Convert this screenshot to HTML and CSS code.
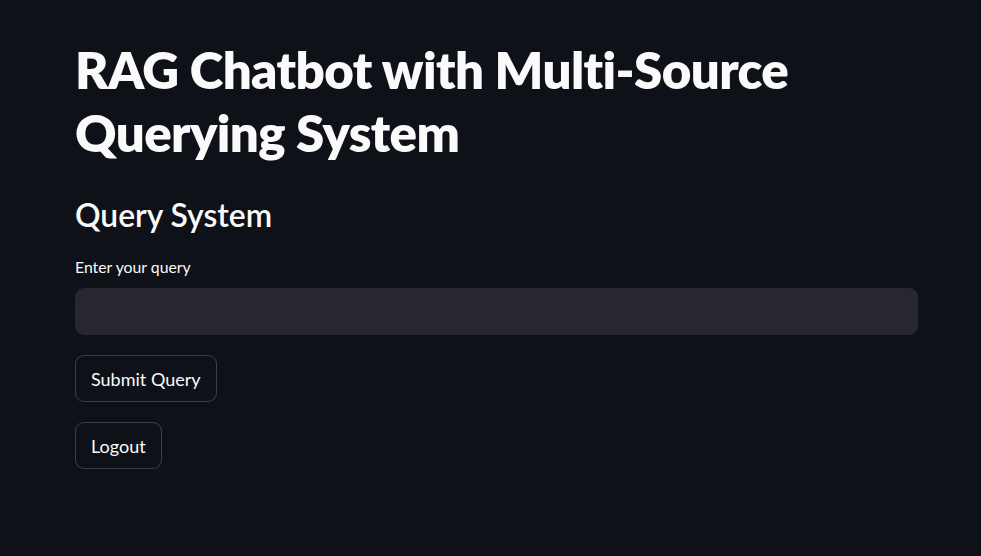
FILE: index.html
```html
<!DOCTYPE html>
<html lang="en">
<head>
    <meta charset="UTF-8">
    <meta name="viewport" content="width=device-width, initial-scale=1.0">
    <title>RAG Chatbot</title>
    <link rel="stylesheet" href="styles.css">
</head>
<body>
    <main class="main-container">
        <h1 class="title">RAG Chatbot with Multi-Source Querying System</h1>
        <h2 class="subheader">Query System</h2>

        <div class="field">
            <label class="field-label" for="query">Enter your query</label>
            <input class="text-input" id="query" type="text">
        </div>

        <div class="button-row">
            <button class="btn" type="button">Submit Query</button>
        </div>
        <div class="button-row">
            <button class="btn" type="button">Logout</button>
        </div>
    </main>
</body>
</html>
```

FILE: styles.css
```css
* {
    margin: 0;
    padding: 0;
    box-sizing: border-box;
    font-family: 'Lato', 'Noto Sans', sans-serif;
}

body {
    min-height: 100vh;
    background: #0e1117;
    color: #fafafa;
}

.main-container {
    width: 843px;
    margin-left: 75px;
    padding-top: 38px;
}

.title {
    max-width: 780px;
    font-size: 51px;
    font-weight: 800;
    line-height: 63px;
    letter-spacing: -0.6px;
}

.subheader {
    font-size: 31.8px;
    font-weight: 600;
    line-height: 40px;
    margin-top: 31px;
}

.field {
    margin-top: 22px;
}

.field-label {
    display: block;
    font-size: 15.8px;
    line-height: 20px;
    margin-bottom: 11px;
}

.text-input {
    display: block;
    width: 100%;
    height: 47px;
    background: #262730;
    border: none;
    border-radius: 9px;
    color: #fafafa;
    font-size: 18px;
    padding: 0 14px;
    outline: none;
}

.button-row {
    margin-top: 20px;
}

.btn {
    height: 47px;
    padding: 0 15px;
    background: #0e1117;
    color: #fafafa;
    border: 1px solid rgba(250, 250, 250, 0.2);
    border-radius: 9px;
    font-size: 18px;
    cursor: pointer;
}
```
